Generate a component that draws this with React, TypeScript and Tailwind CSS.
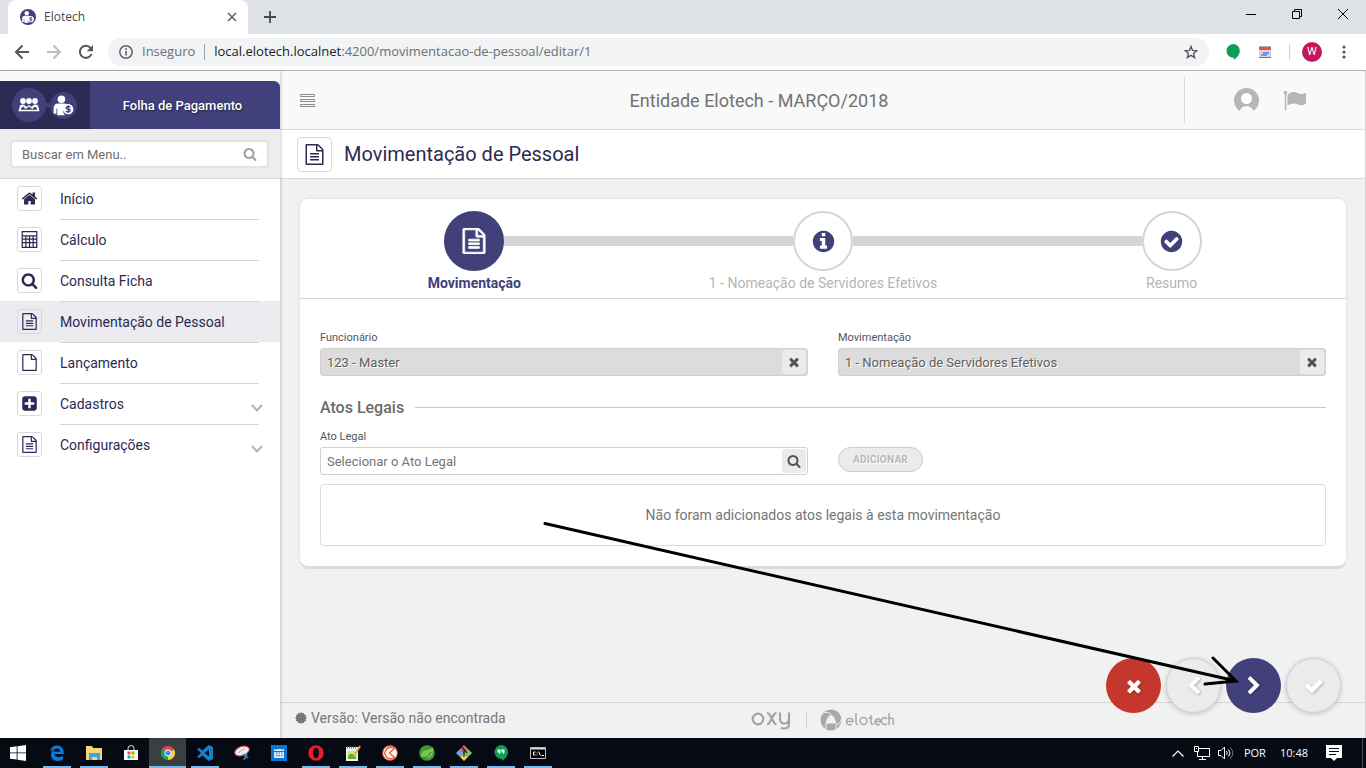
import React from "react";

const FA = {
  times:
    "M1490 1322q0 40-28 68l-136 136q-28 28-68 28t-68-28l-294-294-294 294q-28 28-68 28t-68-28l-136-136q-28-28-28-68t28-68l294-294-294-294q-28-28-28-68t28-68l136-136q28-28 68-28t68 28l294 294 294-294q28-28 68-28t68 28l136 136q28 28 28 68t-28 68l-294 294 294 294q28 28 28 68z",
  check:
    "M1671 566q0 40-28 68l-724 724-136 136q-28 28-68 28t-68-28l-136-136-362-362q-28-28-28-68t28-68l136-136q28-28 68-28t68 28l294 295 656-657q28-28 68-28t68 28l136 136q28 28 28 68z",
  right:
    "M1363 877l-742 742q-19 19-45 19t-45-19l-166-166q-19-19-19-45t19-45l531-531-531-531q-19-19-19-45t19-45l166-166q19-19 45-19t45 19l742 742q19 19 19 45t-19 45z",
  left:
    "M1427 301l-531 531 531 531q19 19 19 45t-19 45l-166 166q-19 19-45 19t-45-19l-742-742q-19-19-19-45t19-45l742-742q19-19 45-19t45 19l166 166q19 19 19 45t-19 45z",
  search:
    "M1216 832q0-185-131.5-316.5t-316.5-131.5-316.5 131.5-131.5 316.5 131.5 316.5 316.5 131.5 316.5-131.5 131.5-316.5zm512 832q0 52-38 90t-90 38q-54 0-90-38l-343-342q-179 124-399 124-143 0-273.5-55.5t-225-150-150-225-55.5-273.5 55.5-273.5 150-225 225-150 273.5-55.5 273.5 55.5 225 150 150 225 55.5 273.5q0 220-124 399l343 343q37 37 37 90z",
  home:
    "M1472 992v480q0 26-19 45t-45 19h-384v-384h-256v384h-384q-26 0-45-19t-19-45v-480q0-1 .5-3t.5-3l575-474 575 474q1 2 1 6zm223-69l-62 74q-8 9-21 11h-3q-13 0-21-7l-692-577-692 577q-12 8-24 7-13-2-21-11l-62-74q-8-10-7-23.5t11-21.5l719-599q32-26 76-26t76 26l244 204v-195q0-14 9-23t23-9h192q14 0 23 9t9 23v408l219 182q10 8 11 21.5t-7 23.5z",
  fileText:
    "M1596 380q28 28 48 76t20 88v1152q0 40-28 68t-68 28h-1344q-40 0-68-28t-28-68v-1600q0-40 28-68t68-28h896q40 0 88 20t76 48zm-444-244v376h376q-10-29-22-41l-313-313q-12-12-41-22zm384 1528v-1024h-416q-40 0-68-28t-28-68v-416h-768v1536h1280zm-1024-864q0-14 9-23t23-9h704q14 0 23 9t9 23v64q0 14-9 23t-23 9h-704q-14 0-23-9t-9-23v-64zm736 224q14 0 23 9t9 23v64q0 14-9 23t-23 9h-704q-14 0-23-9t-9-23v-64q0-14 9-23t23-9h704zm0 256q14 0 23 9t9 23v64q0 14-9 23t-23 9h-704q-14 0-23-9t-9-23v-64q0-14 9-23t23-9h704z",
  file:
    "M1596 380q28 28 48 76t20 88v1152q0 40-28 68t-68 28h-1344q-40 0-68-28t-28-68v-1600q0-40 28-68t68-28h896q40 0 88 20t76 48zm-444-244v376h376q-10-29-22-41l-313-313q-12-12-41-22zm384 1528v-1024h-416q-40 0-68-28t-28-68v-416h-768v1536h1280z",
  checkCircle:
    "M1412 734q0-28-18-46l-91-90q-19-19-45-19t-45 19l-408 407-226-226q-19-19-45-19t-45 19l-91 90q-18 18-18 46 0 27 18 45l362 362q19 19 45 19 27 0 46-19l543-543q18-18 18-45zm252 162q0 209-103 385.5t-279.5 279.5-385.5 103-385.5-103-279.5-279.5-103-385.5 103-385.5 279.5-279.5 385.5-103 385.5 103 279.5 279.5 103 385.5z",
  infoCircle:
    "M1152 1376v-160q0-14-9-23t-23-9h-96v-512q0-14-9-23t-23-9h-320q-14 0-23 9t-9 23v160q0 14 9 23t23 9h96v320h-96q-14 0-23 9t-9 23v160q0 14 9 23t23 9h448q14 0 23-9t9-23zm-128-896v-160q0-14-9-23t-23-9h-192q-14 0-23 9t-9 23v160q0 14 9 23t23 9h192q14 0 23-9t9-23zm640 416q0 209-103 385.5t-279.5 279.5-385.5 103-385.5-103-279.5-279.5-103-385.5 103-385.5 279.5-279.5 385.5-103 385.5 103 279.5 279.5 103 385.5z",
  plusSquare:
    "M1408 960v-128q0-26-19-45t-45-19h-320v-320q0-26-19-45t-45-19h-128q-26 0-45 19t-19 45v320h-320q-26 0-45 19t-19 45v128q0 26 19 45t45 19h320v320q0 26 19 45t45 19h128q26 0 45-19t19-45v-320h320q26 0 45-19t19-45zm256-544v960q0 119-84.5 203.5t-203.5 84.5h-960q-119 0-203.5-84.5t-84.5-203.5v-960q0-119 84.5-203.5t203.5-84.5h960q119 0 203.5 84.5t84.5 203.5z",
  calculator:
    "M64 0h1664v1792H64zM192 128v320h1408V128zM192 576v224h256V576zm384 0v224h256V576zm384 0v224h256V576zm384 0v224h256V576zM192 928v224h256V928zm384 0v224h256V928zm384 0v224h256V928zm384 0v224h256V928zM192 1280v384h256v-384zm384 0v384h256v-384zm384 0v384h256v-384zm384 0v384h256v-384z",
};

type IconName = keyof typeof FA;

function Icon({ name, className }: { name: IconName; className: string }) {
  return (
    <svg viewBox="0 0 1792 1792" fill="currentColor" fillRule="evenodd" className={className} aria-hidden="true">
      <path d={FA[name]} />
    </svg>
  );
}

function PersonCoin({ className }: { className: string }) {
  return (
    <svg viewBox="0 0 26 26" className={className} aria-hidden="true">
      <circle cx="13" cy="13" r="13" fill="#41407a" />
      <circle cx="11" cy="7" r="3.6" fill="#fff" />
      <path d="M3.500 21v-5.500Q3.500 11 8 11h5q2.500 0 3.500 1a6.500 6.500 0 0 0-2 10.500H7V16h-.8v5z" fill="#fff" />
      <circle cx="17.500" cy="16.500" r="5" fill="#fff" />
      <path d="M19.500 14.800q-.6-1-2-1t-2 1.200 2 1.500 2 1.500-2 1.300-2.200-1M17.500 12.900v7.300" fill="none" stroke="#35346a" strokeWidth="1.100" />
    </svg>
  );
}

function PeopleMark() {
  return (
    <svg viewBox="0 0 34 34" className="size-[34px]" aria-hidden="true">
      <circle cx="17" cy="17" r="17" fill="#41407a" />
      <g fill="#fff">
        <circle cx="11" cy="13" r="2.900" />
        <circle cx="17" cy="13" r="2.900" />
        <circle cx="23" cy="13" r="2.900" />
        <path d="M8 17.500q3-2 5.500.5l1 1 1-1q1.500-1.500 3 0l1 1 1-1q2.500-2.500 5.500-.5l1.500 5.800H6.500zM8.800 21.700h16.400l-.4-1.700-2-1.500-2.500 2.500-3.300-2.500-3.300 2.500-2.500-2.500-2 1.500z" fillRule="evenodd" />
      </g>
    </svg>
  );
}

function Browser() {
  return (
    <header className="shrink-0 font-['Open_Sans',sans-serif]">
      <div className="flex h-[34px] bg-[#dee1e6] pl-2">
        <div className="flex w-60 items-center rounded-t-lg bg-white pl-3 pr-[7px]">
          <PersonCoin className="size-4" />
          <span className="ml-2 flex-1 text-xs text-[#45484c]">Elotech</span>
          <button aria-label="Fechar guia" className="p-1">
            <svg viewBox="0 0 10 10" className="size-[10px]"><path d="M1 1l8 8M9 1L1 9" stroke="#5f6368" strokeWidth="1.600" /></svg>
          </button>
        </div>
        <button aria-label="Nova guia" className="ml-4">
          <svg viewBox="0 0 12 12" className="size-3"><path d="M6 0v12M0 6h12" stroke="#45484c" strokeWidth="1.800" /></svg>
        </button>
        <div className="ml-auto flex items-start pt-[9px]">
          <button aria-label="Minimizar" className="flex w-[46px] justify-center"><svg viewBox="0 0 10 10" className="size-[10px]"><path d="M0 5.500h10" stroke="#000" /></svg></button>
          <button aria-label="Restaurar" className="flex w-[46px] justify-center"><svg viewBox="0 0 10 10" className="size-[10px]"><path d="M.5 2.500h7v7h-7zM2.500 2.500v-2h7v7h-2" fill="none" stroke="#000" /></svg></button>
          <button aria-label="Fechar" className="flex w-[46px] justify-center"><svg viewBox="0 0 10 10" className="size-[10px]"><path d="M0 0l10 10M10 0L0 10" stroke="#000" /></svg></button>
        </div>
      </div>
      <div className="flex h-[37px] items-center border-b border-[#b5b5b7] bg-white pl-[14px] pr-5">
        <button aria-label="Voltar"><svg viewBox="0 0 16 16" className="size-4"><path d="M15 8H2M8.500 1.500L2 8l6.500 6.500" fill="none" stroke="#55585d" strokeWidth="2" /></svg></button>
        <button aria-label="Avançar" className="ml-4"><svg viewBox="0 0 16 16" className="size-4"><path d="M1 8h13M7.500 1.500L14 8l-6.500 6.500" fill="none" stroke="#bcbdbf" strokeWidth="2" /></svg></button>
        <button aria-label="Recarregar" className="ml-4"><svg viewBox="0 0 16 16" className="size-4"><path d="M13.500 10A6 6 0 1 1 12.500 4" fill="none" stroke="#55585d" strokeWidth="2" /><path d="M15 1v6.300H8.700z" fill="#55585d" /></svg></button>
        <div className="ml-[14px] flex h-7 flex-1 items-center rounded-full bg-[#f1f3f4] px-[11px] text-[13px]">
          <svg viewBox="0 0 14 14" className="size-[14px]"><circle cx="7" cy="7" r="6.200" fill="none" stroke="#5f6368" strokeWidth="1.500" /><path d="M7 6v4.500M7 3.300v1.600" stroke="#5f6368" strokeWidth="1.600" /></svg>
          <span className="ml-[9px] text-[#6b6f74]">Inseguro</span>
          <span className="mx-[9px] h-4 w-px bg-[#a4a6a9]" />
          <span className="flex-1 text-[#6b6f74]"><span className="text-[#202124]">local.elotech.localnet</span>:4200/movimentacao-de-pessoal/editar/1</span>
          <button aria-label="Favoritar"><svg viewBox="0 0 14 14" className="size-[14px]"><path d="M7 1.500l1.600 3.900 4.200.3-3.200 2.700 1 4.100L7 10.300l-3.600 2.200 1-4.100L1.200 5.700l4.200-.3z" fill="none" stroke="#55585d" strokeWidth="1.400" /></svg></button>
        </div>
        <svg viewBox="0 0 14 16" className="ml-[17px] h-4 w-[14px]"><path d="M7 0a6.800 6.800 0 0 1 6.800 7c0 3.500-2.800 6.800-6 9v-2.200A6.900 6.900 0 1 1 7 0z" fill="#0f9d58" /></svg>
        <svg viewBox="0 0 12 12" className="ml-[19px] size-3"><path d="M0 0h12v12H0z" fill="#cdd6ef" /><path d="M0 1h12v3H0z" fill="#f0503f" /><path d="M2 10V8h2V6h6v2H8v2z" fill="#7e94cf" /><path d="M0 .5h12" stroke="#a9aebf" /><path d="M0 11.500h12" stroke="#6577ad" /></svg>
        <span className="ml-[18px] h-4 w-px bg-[#cfd0d2]" />
        <span className="ml-3 flex size-5 items-center justify-center rounded-full bg-[#c2185b] font-['Roboto',sans-serif] text-[11px] text-white">W</span>
        <button aria-label="Menu" className="ml-5"><svg viewBox="0 0 4 14" className="h-[14px] w-1" fill="#55585d"><circle cx="2" cy="2" r="1.600" /><circle cx="2" cy="7" r="1.600" /><circle cx="2" cy="12" r="1.600" /></svg></button>
      </div>
    </header>
  );
}

const menu: { label: string; icon: IconName; active?: boolean; sub?: boolean }[] = [
  { label: "Início", icon: "home" },
  { label: "Cálculo", icon: "calculator" },
  { label: "Consulta Ficha", icon: "search" },
  { label: "Movimentação de Pessoal", icon: "fileText", active: true },
  { label: "Lançamento", icon: "file" },
  { label: "Cadastros", icon: "plusSquare", sub: true },
  { label: "Configurações", icon: "fileText", sub: true },
];

function Sidebar() {
  return (
    <aside className="z-10 flex w-[280px] shrink-0 flex-col bg-white shadow-[1px_0_3px_rgba(0,0,0,0.18)]">
      <div className="bg-[#f9f9f9] pt-[10px]">
        <div className="flex h-12 overflow-hidden rounded-tr-md bg-[#41407a]">
          <div className="flex w-[90px] items-center bg-[#2b2a52] pl-3">
            <PeopleMark />
            <span className="h-1 w-1 bg-[#41407a]" />
            <PersonCoin className="size-[27px]" />
          </div>
          <div className="flex flex-1 items-center justify-center pr-[5px] pt-[2px] text-[13px] font-medium text-white [text-shadow:1px_1px_2px_rgba(0,0,0,0.5)]">Folha de Pagamento</div>
        </div>
      </div>
      <div className="border-b border-[#d5d5d5] bg-[#ededed] pb-[10px] pl-[10px] pr-[11px] pt-[11px]">
        <label className="flex h-[28px] items-center rounded border-2 border-[#e3e3e3] bg-white pl-[10px] pr-[10px]">
          <input type="text" aria-label="Buscar em Menu" placeholder="Buscar em Menu.." className="min-w-0 flex-1 bg-transparent pt-px text-[13px] outline-none placeholder:text-[#6f6f6f]" />
          <Icon name="search" className="size-[14px] text-[#a0a0a0]" />
        </label>
      </div>
      <nav>
        {menu.map((m, i) => (
          <a
            key={m.label}
            href="#"
            className={m.active ? "flex h-[41px] items-stretch bg-[#ebebf0] pl-[17px] pr-[21px] pt-0" : i === 0 ? "flex h-10 items-stretch pl-[17px] pr-[21px]" : "flex h-[41px] items-stretch pl-[17px] pr-[21px]"}
          >
            <span className={i === 0 ? "mt-[7px] flex size-[25px] items-center justify-center rounded-[3px] border border-[#d9d9d9] text-[#2b2a52]" : "mt-2 flex size-[25px] items-center justify-center rounded-[3px] border border-[#d9d9d9] text-[#2b2a52]"}>
              <Icon name={m.icon} className="size-[17px]" />
            </span>
            <span className={i > 0 ? "ml-[18px] flex flex-1 items-center justify-between border-t border-[#d5d5d5] text-sm text-[#2b2a52]" : "ml-[18px] flex flex-1 items-center justify-between text-sm text-[#2b2a52]"}>
              {m.label}
              {m.sub && (
                <svg viewBox="0 0 12 12" className="-mr-1 mt-2 size-3"><path d="M1 3l5 5.500L11 3" fill="none" stroke="#b3b3b3" strokeWidth="2" /></svg>
              )}
            </span>
          </a>
        ))}
      </nav>
    </aside>
  );
}

function Steps() {
  const base = "relative z-10 flex size-[60px] items-center justify-center rounded-full border-2";
  const steps: { label: string; icon: IconName }[] = [
    { label: "Movimentação", icon: "fileText" },
    { label: "1 - Nomeação de Servidores Efetivos", icon: "infoCircle" },
    { label: "Resumo", icon: "checkCircle" },
  ];
  return (
    <ol className="grid grid-cols-3 border-b border-[#d5d5d5] pt-3">
      {steps.map((s, i) => (
        <li key={s.label} className="flex flex-col items-center">
          <div className="flex w-full items-center">
            <span className={i > 0 ? "h-[10px] flex-1 bg-[#d5d5d5]" : "h-[10px] flex-1"} />
            <button aria-label={s.label} className={i === 0 ? `${base} border-[#41407a] bg-[#41407a] text-white` : `${base} border-[#d5d5d5] bg-white text-[#41407a]`}>
              <Icon name={s.icon} className={i === 0 ? "size-[26px] stroke-current stroke-[50]" : "size-[25px]"} />
            </button>
            <span className={i < 2 ? "h-[10px] flex-1 bg-[#d5d5d5]" : "h-[10px] flex-1"} />
          </div>
          <span className={i === 0 ? "pb-[5px] pt-[2px] text-sm font-bold text-[#41407a]" : "pb-[5px] pt-[2px] text-sm text-[#b5b5b5]"}>{s.label}</span>
        </li>
      ))}
    </ol>
  );
}

function Field({ id, label, value, placeholder, icon }: { id: string; label: string; value?: string; placeholder?: string; icon: IconName }) {
  return (
    <div>
      <label htmlFor={id} className="block text-[11px] leading-4 text-[#555]">{label}</label>
      <div className={value ? "mt-[2px] flex h-7 items-center rounded-[3px] border border-[#d0d0d0] bg-[#dcdcdc] pr-px" : "mt-[2px] flex h-7 items-center rounded-[3px] border border-[#d0d0d0] bg-white pr-px"}>
        <input
          id={id}
          type="text"
          defaultValue={value}
          readOnly={Boolean(value)}
          placeholder={placeholder}
          className={value ? "min-w-0 flex-1 bg-transparent px-[6px] pt-px text-[13px] text-[#606060] outline-none [text-shadow:1px_1px_0_#fff]" : "min-w-0 flex-1 bg-transparent px-[6px] pt-px text-[13px] outline-none placeholder:text-[#757575]"}
        />
        <button aria-label={value ? "Limpar" : "Pesquisar"} className="flex size-6 items-center justify-center rounded-[3px] bg-[#ebebeb] text-[#555]">
          <Icon name={icon} className="size-[14px]" />
        </button>
      </div>
    </div>
  );
}

function ActionButtons() {
  const muted = "flex size-[55px] items-center justify-center rounded-full border border-[#d2d2d2] bg-[#ebebeb] text-white shadow-[0_1px_5px_rgba(0,0,0,0.2)]";
  const glyph = "size-5 drop-shadow-[1px_1px_1px_rgba(0,0,0,0.25)]";
  return (
    <div className="absolute bottom-[25px] right-6 z-20 flex gap-[5px]">
      <button aria-label="Cancelar" className="flex size-[55px] items-center justify-center rounded-full bg-[#c5372c] text-white"><Icon name="times" className={glyph} /></button>
      <button aria-label="Anterior" className={muted}><Icon name="left" className={glyph} /></button>
      <button aria-label="Próximo" className="flex size-[55px] items-center justify-center rounded-full bg-[#41407a] text-white"><Icon name="right" className={glyph} /></button>
      <button aria-label="Confirmar" className={muted}><Icon name="check" className={glyph} /></button>
    </div>
  );
}

function Certificate() {
  const points = Array.from({ length: 24 }, (_, i) => {
    const r = i % 2 === 0 ? 6 : 4.7;
    const a = (i * Math.PI) / 12;
    return `${6 + r * Math.cos(a)},${6 + r * Math.sin(a)}`;
  }).join(" ");
  return <svg viewBox="0 0 12 12" className="size-3" fill="#777"><polygon points={points} /></svg>;
}

function Footer() {
  return (
    <footer className="relative flex h-9 items-center border-t border-[#d5d5d5] px-[15px] pb-[6px] text-sm text-[#777]">
      <Certificate />
      <span className="ml-1">Versão: Versão não encontrada</span>
      <div className="absolute inset-x-0 top-[6px] flex items-center justify-center pr-px text-[#a8a8a8]">
        <svg viewBox="0 0 40 20" className="h-5 w-10" fill="none" stroke="#a3a3a3" strokeWidth="2.200" aria-label="oxy">
          <circle cx="7" cy="9" r="5.300" />
          <path d="M16 3q1.500 0 2.500 1.500l4.500 8q1 1.800 2.500 1.800M25.500 3q-1.500 0-2.500 1.500l-4.500 8q-1 1.800-2.500 1.800M29 2.500v6q0 5 4.500 5t4.500-5v-6v12q0 4-5 4-2 0-3-.5" />
        </svg>
        <span className="ml-[15px] h-[17px] w-px bg-[#cfcfcf]" />
        <svg viewBox="0 0 22 22" className="ml-[13px] size-[22px]" aria-hidden="true">
          <circle cx="11" cy="11" r="10.500" fill="#a8a8a8" />
          <path d="M6 14.500q0-6 5-9 5 3 5 9z" fill="#f1f1f1" />
          <path d="M1 5.500q5-4 10-.5M21.500 10q-1 5-5.500 5.500v5M6 14v6.500" fill="none" stroke="#f1f1f1" />
        </svg>
        <svg viewBox="0 0 49 16" className="ml-[3px] h-4 w-[49px]" fill="none" stroke="#a8a8a8" strokeWidth="1.500" aria-label="elotech">
          <path d="M1.500 9.500h6.500a3.300 3.300 0 1 0-1.300 2.700M11 1v9.500q0 2 2 2M26 3v7q0 2.300 2.500 2.300M23.500 6h4M30 9.500h6a3 3 0 1 0-1.200 2.700M42 6.800a3.300 3.300 0 1 0 0 4.700M44 1v12M44 8.500q0-2.500 2.200-2.500T48.200 8.500V13" />
          <circle cx="18.500" cy="9" r="3.400" />
        </svg>
      </div>
    </footer>
  );
}

function Main() {
  return (
    <main className="relative flex min-w-0 flex-1 flex-col border-r border-[#d5d5d5] bg-[#f1f1f1]">
      <div className="flex h-[59px] items-center border-b border-[#d9d9d9] bg-[#f9f9f9] pl-5">
        <button aria-label="Alternar menu"><svg viewBox="0 0 15 13" className="h-[13px] w-[15px]" fill="none" stroke="#8b8b8b"><path d="M.5.500h14v2H.5zM.5 5.500h14v2H.5zM.5 10.500h14v2H.5z" /></svg></button>
        <h2 className="flex-1 pl-[19px] pt-[2px] text-center text-lg text-[#727272]">Entidade Elotech - MARÇO/2018</h2>
        <div className="flex h-[46px] w-[181px] items-center border-l border-[#d9d9d9] pl-[49px]">
          <button aria-label="Usuário"><svg viewBox="0 0 25 25" className="size-[25px]"><circle cx="12.500" cy="12.500" r="12.500" fill="#b5b6b8" /><circle cx="12.500" cy="10.500" r="5.500" fill="#fff" /><path d="M5 25q1.500-7 7.500-7t7.500 7z" fill="#f9f9f9" /></svg></button>
          <button aria-label="Bandeira" className="ml-6"><svg viewBox="0 0 24 21" className="h-[21px] w-6" fill="#b5b6b8"><circle cx="2.500" cy="2.500" r="1.800" /><path d="M1.800 3h1.500v17H1.800zM4.500 4.500Q10 .5 14.500 3t8.500-.5v11q-4 3-8.500.8t-10 1.200z" /></svg></button>
        </div>
      </div>
      <div className="flex h-[49px] items-center border-b border-[#d9d9d9] bg-white pl-[17px]">
        <span className="flex size-[35px] items-center justify-center rounded border border-[#d9d9d9] text-[#2b2a52]"><Icon name="fileText" className="size-[21px]" /></span>
        <h1 className="ml-3 text-xl text-[#2b2a52]">Movimentação de Pessoal</h1>
      </div>
      <div className="flex-1 px-5 pr-[19px] pt-5">
        <section className="rounded-lg bg-white shadow-[0_3px_0_#dcdcdc,0_0_3px_rgba(0,0,0,0.12)]">
          <Steps />
          <form className="p-5 pt-[31px]" onSubmit={(e) => e.preventDefault()}>
            <div className="grid grid-cols-2 gap-[30px]">
              <Field id="funcionario" label="Funcionário" value="123 - Master" icon="times" />
              <Field id="movimentacao" label="Movimentação" value="1 - Nomeação de Servidores Efetivos" icon="times" />
            </div>
            <div className="mt-5 flex items-center gap-[11px]">
              <h3 className="text-base font-medium leading-[23px] text-[#6b6b6b]">Atos Legais</h3>
              <span className="h-px flex-1 bg-[#c9c9c9]" />
            </div>
            <div className="mt-[10px] grid grid-cols-2 gap-[30px]">
              <Field id="ato" label="Ato Legal" placeholder="Selecionar o Ato Legal" icon="search" />
              <div className="flex items-end pb-[3px]">
                <button className="h-[25px] rounded-full border border-[#cbcbcb] bg-[#ebebeb] px-[14px] text-[10px] font-bold tracking-wide text-[#b8b8b8] [text-shadow:1px_1px_0_#fff]">ADICIONAR</button>
              </div>
            </div>
            <p className="mt-[9px] rounded border border-[#dcdcdc] py-5 text-center text-sm text-[#757575]">Não foram adicionados atos legais à esta movimentação</p>
          </form>
        </section>
      </div>
      <Footer />
      <ActionButtons />
      <svg viewBox="0 0 696 166" className="pointer-events-none absolute bottom-[50px] right-[126px] z-30 h-[166px] w-[696px]" fill="none" stroke="#000" strokeWidth="3" strokeLinecap="round" aria-hidden="true">
        <path d="M2 1.500L693 159M670 136l23 23-31 3" />
      </svg>
    </main>
  );
}

const apps: { name: string; running: boolean; active?: boolean; art: React.ReactNode }[] = [
  { name: "Edge", running: true, art: <path d="M1 7Q2 0 8.500.5T15 9H5.500q.5 3 4 3 2.500 0 4.500-1v3.300Q12 16 9 16 1.500 15.500 2 9q.5-4 5-5.500-2 1.500-2 3.200h6Q11 3.500 8 3.500 4 3.500 1 7z" fill="#0a7bd8" /> },
  { name: "Explorador", running: true, art: <><path d="M0 1h6l1 2h9v12H0z" fill="#f7d774" /><path d="M3 8h11v7h-3v-3H6v3H3z" fill="#35a7e8" /></> },
  { name: "Loja", running: false, art: <><path d="M1 5h14v10H1z" fill="#fff" /><path d="M5 5V3.500a3 3 0 0 1 6 0V5" fill="none" stroke="#ddd" /><path d="M4.500 6.500h3v3h-3z" fill="#f25022" /><path d="M8.500 6.500h3v3h-3z" fill="#7fba00" /><path d="M4.500 10.500h3v3h-3z" fill="#00a4ef" /><path d="M8.500 10.500h3v3h-3z" fill="#ffb900" /></> },
  { name: "Chrome", running: true, active: true, art: <><path d="M8 8L1.900 4.500a7 7 0 0 1 12.200 0z" fill="#dd4b3e" /><path d="M8 8L14.100 4.500A7 7 0 0 1 8 15z" fill="#f9cd3c" /><path d="M8 8v7A7 7 0 0 1 1.900 4.500z" fill="#1da462" /><circle cx="8" cy="8" r="3.400" fill="#fff" /><circle cx="8" cy="8" r="2.600" fill="#4587f3" /></> },
  { name: "Code", running: true, art: <path d="M11.500 0L16 2v12l-4.500 2-6-5.500L2 13 0 12l4-4-4-4 2-1 3.500 2.500zM12 4.500L7.500 8l4.500 3.500z" fill="#1682cf" fillRule="evenodd" /> },
  { name: "Captura", running: false, art: <><ellipse cx="8" cy="6" rx="7.500" ry="4.500" fill="#eee" stroke="#d03b3b" transform="rotate(-20 8 6)" /><path d="M9 9l5 4M13 9l-3 6" stroke="#398ad0" strokeWidth="1.600" /><path d="M4 8l7-5" stroke="#a8a8a8" /></> },
  { name: "Calendário", running: false, art: <><path d="M0 0h16v16H0z" fill="#0878d8" /><path d="M3 4h10v9H3z" fill="#d6e9fa" /><path d="M3 6.500h10M5 8h1.500m1 0H9m1 0h1.500M5 10.500h1.500m1 0H9m1 0h1.500M5 3v2M11 3v2" stroke="#0878d8" /></> },
  { name: "Opera", running: true, art: <><circle cx="8" cy="8" r="7.800" fill="#e51c2c" /><ellipse cx="8" cy="8" rx="3" ry="5.200" fill="#070c14" /></> },
  { name: "Editor", running: true, art: <><path d="M1 2h12v14H1z" fill="#f2f2f2" /><path d="M2.500 6h9v8h-9z" fill="#c8e88c" /><path d="M2 2.500h10" stroke="#777" strokeWidth="2" strokeDasharray="1 1" /><path d="M3 14q0-6 4-5t4 5z" fill="#5fae2c" /><path d="M15 1L9 11" stroke="#e5ad2d" strokeWidth="2" /></> },
  { name: "Pixel", running: true, art: <><circle cx="8" cy="8" r="7.800" fill="#f06037" /><circle cx="8" cy="8" r="6.800" fill="#fff" /><path d="M12.500 3.500L7.500 8l5 4.500Q8 15.500 4.500 12L2.500 8l2-4Q8 .5 12.500 3.500z" fill="none" stroke="#f06037" strokeWidth="1.500" /></> },
  { name: "Spring", running: true, art: <><circle cx="8" cy="8" r="7.800" fill="#429638" /><path d="M14 2q1 10-5 11-7 1-7-4 1-3.500 6-4 4-.5 6-3z" fill="#76c94b" /><path d="M3 13q6 0 9-6" fill="none" stroke="#286e25" /></> },
  { name: "Git", running: true, art: <><path d="M4 4l4 4-4 4-4-4z" fill="#6ba5ea" /><path d="M8 0l4 4-4 4-4-4z" fill="#e96259" /><path d="M12 4l4 4-4 4-4-4z" fill="#79c565" /><path d="M8 8l4 4-4 4-4-4z" fill="#f2cb52" /><path d="M6 2l5 6M8 4v8" stroke="#222" strokeWidth="1.200" /></> },
  { name: "Hangouts", running: true, art: <><path d="M8 0a7 7 0 0 1 7 7c0 4-3 7-6 9v-2A7 7 0 1 1 8 0z" fill="#0f9d58" /><path d="M4.500 4.500h3v3l-1.500 2V7.500H4.500zM8.500 4.500h3v3l-1.500 2V7.500H8.500z" fill="#fff" /></> },
  { name: "Prompt", running: true, art: <><path d="M.5 2.500h15v11H.5z" fill="#000" stroke="#bbb" /><path d="M1 3h14v1.500H1z" fill="#ddd" /><path d="M5.500 7h-2v3h2M7 7.500v.8M7 9.500v.8M8.500 6.500l2 4M11.500 10.500H14" stroke="#fff" fill="none" /></> },
];

function Taskbar() {
  return (
    <div className="flex h-[30px] shrink-0 items-stretch bg-[#060b13] text-white">
      <button aria-label="Iniciar" className="flex w-[38px] items-center justify-center pr-[2px]">
        <svg viewBox="0 0 16 16" className="size-4" fill="#fff"><path d="M0 2.300L6.700 1.300v6.200H0zM7.500 1.200L16 0v7.500H7.500zM0 8.300h6.700v6.300L0 13.700zM7.500 8.300H16V16l-8.500-1.200z" /></svg>
      </button>
      {apps.map((a) => (
        <button key={a.name} aria-label={a.name} className={a.active ? "flex w-[37px] flex-col items-center bg-[#3b3e43]" : "flex w-[37px] flex-col items-center"}>
          <span className="flex h-7 items-center pt-px"><svg viewBox="0 0 16 16" className="size-4">{a.art}</svg></span>
          <span className={a.active ? "h-[2px] w-full bg-[#76b9ed]" : a.running ? "h-[2px] w-7 bg-[#76b9ed]" : "h-[2px] w-7"} />
        </button>
      ))}
      <div className="ml-auto flex items-center pr-[3px] font-['Open_Sans',sans-serif] text-[11px]">
        <svg viewBox="0 0 12 7" className="h-[7px] w-3"><path d="M.5 6.500L6 1l5.500 5.500" fill="none" stroke="#fff" strokeWidth="1.200" /></svg>
        <svg viewBox="0 0 16 14" className="ml-[10px] h-[14px] w-4" fill="none" stroke="#fff"><path d="M5 2.500h10.500v8H3.500V6M.5.500h4v5h-4zM8.500 10.500v2.500M5 13.500h7M2 2.500h1" /></svg>
        <svg viewBox="0 0 16 14" className="ml-2 h-[14px] w-4" fill="none" stroke="#fff"><path d="M.5 4.500h2.500l3.500-3.500v12L3 9.500H.5zM8.500 5q1.500 2 0 4M10.500 3.500q3 3.500 0 7" /><path d="M12.500 1.500q4.500 5.500 0 11" stroke="#777" /></svg>
        <span className="ml-[10px] w-[24px]">POR</span>
        <span className="ml-3">10:48</span>
        <svg viewBox="0 0 16 16" className="ml-[18px] size-4"><path d="M0 0h16v13h-5l-3 3-3-3H0z" fill="#fff" /><path d="M3 3.500h10M3 6.500h10M3 9.500h7" stroke="#070c14" /></svg>
        <span className="ml-5 h-[30px] w-px bg-[#4b5058]" />
      </div>
    </div>
  );
}

export default function App() {
  return (
    <div className="flex min-h-screen flex-col bg-[#f1f1f1] font-['Roboto',sans-serif]">
      <Browser />
      <div className="flex flex-1 items-stretch">
        <Sidebar />
        <Main />
      </div>
      <Taskbar />
    </div>
  );
}
